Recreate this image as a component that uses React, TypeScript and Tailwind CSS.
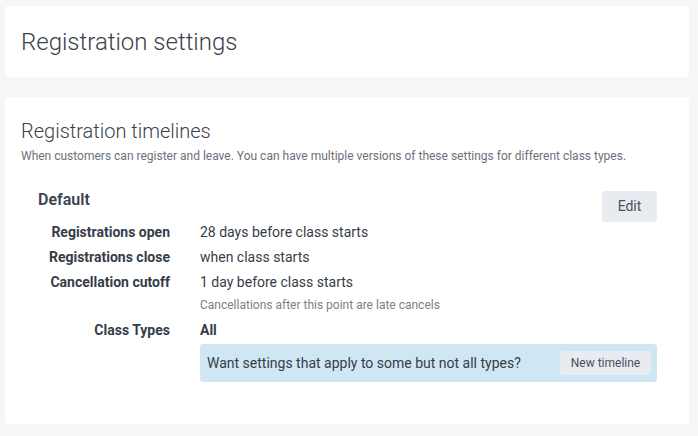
import React from 'react';

const rows = [
  { label: 'Registrations open', value: '28 days before class starts' },
  { label: 'Registrations close', value: 'when class starts' },
  { label: 'Cancellation cutoff', value: '1 day before class starts', note: 'Cancellations after this point are late cancels' },
];

export default function App() {
  return (
    <div
      className="min-h-screen w-full bg-[#f4f6f8] pl-[5px] pr-[9px] pt-[6px] pb-3 text-[#363d48]"
      style={{ fontFamily: 'Roboto, "Liberation Sans", sans-serif' }}
    >
      {/* Page header */}
      <div className="h-[71px] bg-white rounded-[3px] px-4 flex items-center">
        <h1 className="text-[24px] leading-8 font-light text-[#3b4149]">Registration settings</h1>
      </div>

      {/* Timelines card */}
      <div className="mt-5 h-[327px] bg-white rounded-[3px] px-4 pt-5">
        <h2 className="text-[20px] leading-7 font-light text-[#3b4149]">Registration timelines</h2>
        <p className="mt-[3px] text-[12px] leading-4 text-[#6b717a]">
          When customers can register and leave. You can have multiple versions of these settings for different class types.
        </p>

        <div className="mt-6 px-[17px] pr-4">
          <div className="flex justify-between items-start h-8">
            <div className="text-[16px] leading-6 font-semibold text-[#3a4150]">Default</div>
            <button className="mt-[3px] h-[31px] w-[55px] rounded-[3px] bg-[#e8ebef] text-[14px] text-[#4a515c]">
              Edit
            </button>
          </div>

          <div className="grid grid-cols-[132px_1fr] gap-x-[30px] text-[14px]">
            {rows.map(r => (
              <React.Fragment key={r.label}>
                <div className="text-right font-bold leading-[25px] text-[#363d4a]">{r.label}</div>
                <div>
                  <div className="leading-[25px] text-[#363d48]">{r.value}</div>
                  {r.note && <div className="text-[12px] leading-5 text-[#7a8089]">{r.note}</div>}
                </div>
              </React.Fragment>
            ))}
            <div className="mt-[3px] text-right font-bold leading-[25px] text-[#363d4a]">Class Types</div>
            <div className="mt-[3px]">
              <div className="leading-[25px] font-bold text-[#363d48]">All</div>
              <div className="mt-[1px] h-[38px] rounded-[3px] bg-[#cfe6f4] pl-[7px] pr-[6px] flex items-center justify-between">
                <span className="text-[14px] text-[#363d48]">Want settings that apply to some but not all types?</span>
                <button className="h-6 w-[91px] rounded-[2px] bg-[#e8ebef] text-[12px] text-[#4a515c]">New timeline</button>
              </div>
            </div>
          </div>
        </div>
      </div>
    </div>
  );
}
